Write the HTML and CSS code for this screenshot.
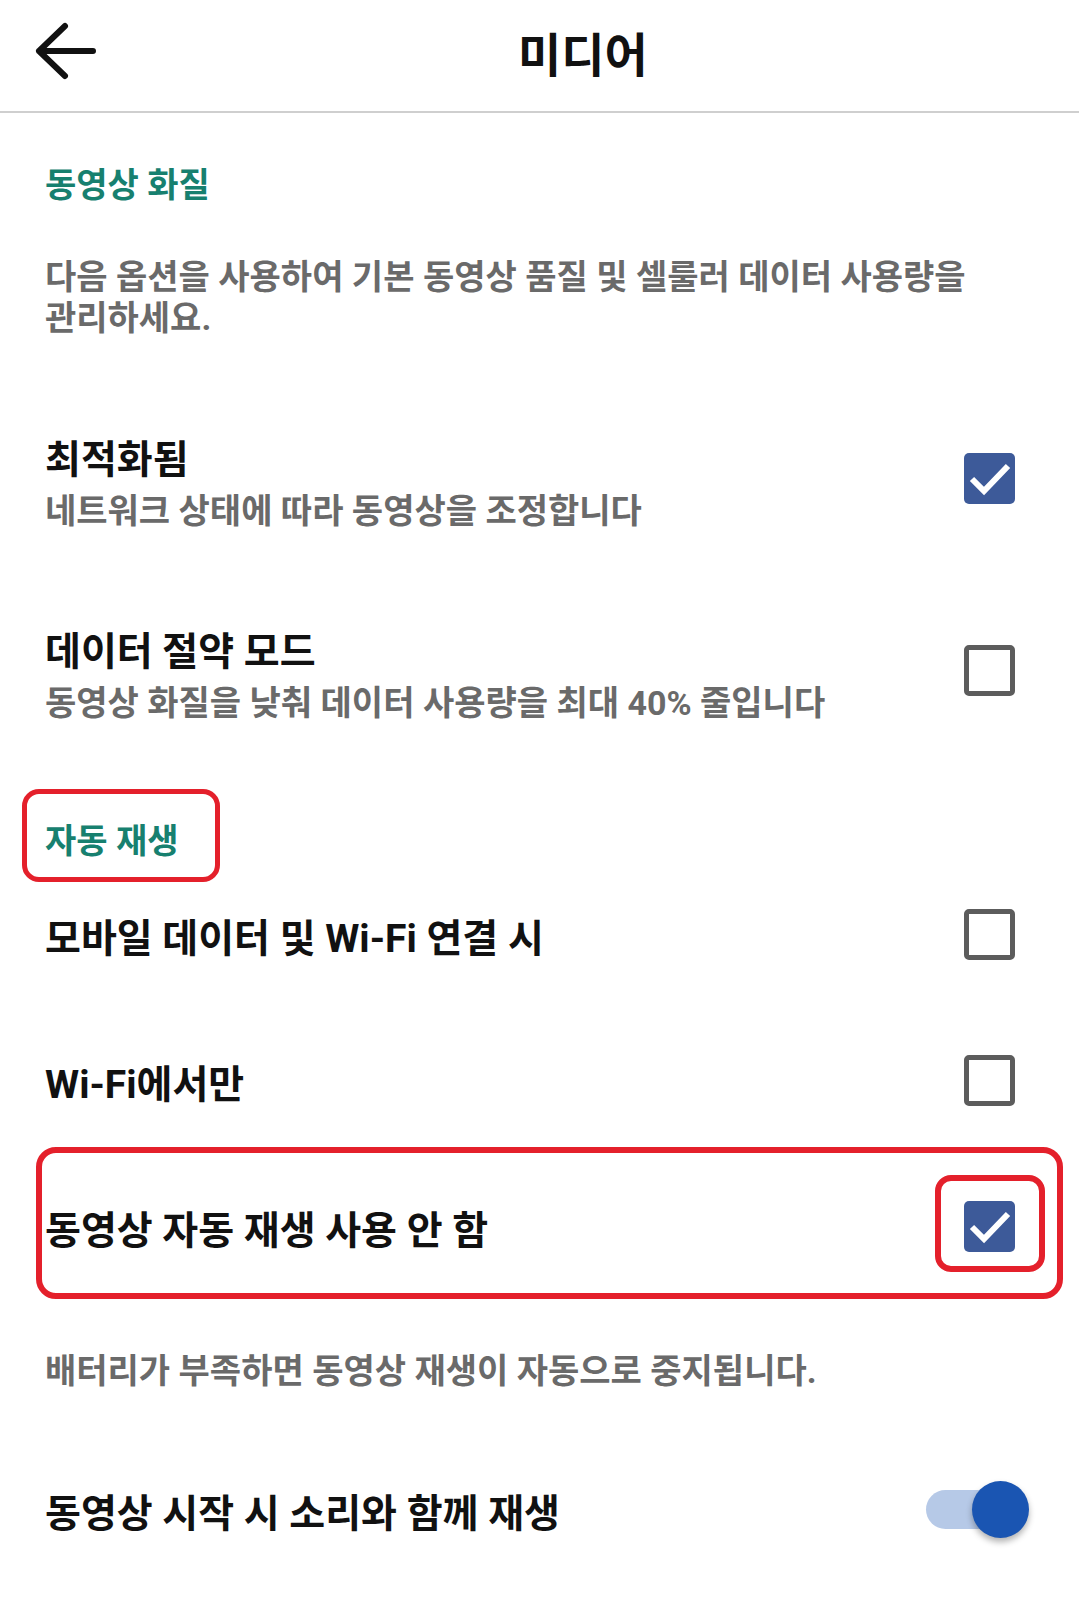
FILE: index.html
```html
<!DOCTYPE html>
<html lang="ko">
<head>
  <meta charset="UTF-8">
  <meta name="viewport" content="width=device-width, initial-scale=1">
  <title>미디어</title>
  <link rel="stylesheet" href="styles.css">
</head>
<body>
  <header>
    <svg class="back" viewBox="0 0 66 60" width="66" height="60">
      <path d="M33 5 L7 30 L33 55 M7 30 H61" fill="none" stroke="#111111" stroke-width="6" stroke-linecap="round" stroke-linejoin="round"/>
    </svg>
    <h1>미디어</h1>
  </header>

  <main>
    <h2 class="group">동영상 화질</h2>
    <p class="note intro">다음 옵션을 사용하여 기본 동영상 품질 및 셀룰러 데이터 사용량을 관리하세요.</p>

    <div class="row double">
      <div class="text">
        <div class="label">최적화됨</div>
        <div class="sub">네트워크 상태에 따라 동영상을 조정합니다</div>
      </div>
      <span class="check on">
        <svg viewBox="0 0 51 51" width="51" height="51"><path d="M8 26 L20 38 L44 13" fill="none" stroke="#ffffff" stroke-width="6"/></svg>
      </span>
    </div>

    <div class="row double">
      <div class="text">
        <div class="label">데이터 절약 모드</div>
        <div class="sub">동영상 화질을 낮춰 데이터 사용량을 최대 40% 줄입니다</div>
      </div>
      <span class="check"></span>
    </div>

    <h2 class="group second">자동 재생<span class="ring ring-title"></span></h2>

    <div class="row single">
      <div class="label">모바일 데이터 및 Wi-Fi 연결 시</div>
      <span class="check"></span>
    </div>

    <div class="row single">
      <div class="label">Wi-Fi에서만</div>
      <span class="check"></span>
    </div>

    <div class="row single marked">
      <div class="label">동영상 자동 재생 사용 안 함</div>
      <span class="check on">
        <svg viewBox="0 0 51 51" width="51" height="51"><path d="M8 26 L20 38 L44 13" fill="none" stroke="#ffffff" stroke-width="6"/></svg>
      </span>
      <span class="ring ring-row"></span>
      <span class="ring ring-box"></span>
    </div>

    <p class="note battery">배터리가 부족하면 동영상 재생이 자동으로 중지됩니다.</p>

    <div class="row single">
      <div class="label">동영상 시작 시 소리와 함께 재생</div>
      <span class="toggle"><span class="track"></span><span class="thumb"></span></span>
    </div>
  </main>
</body>
</html>
```

FILE: styles.css
```css
body {
  margin: 0;
  width: 1079px;
  background: #ffffff;
  color: #111111;
  font-family: Roboto, "Noto Sans CJK KR", sans-serif;
  font-weight: 700;
  word-break: keep-all;
}

header {
  display: flex;
  align-items: flex-start;
  height: 111px;
  border-bottom: 2px solid #cfcfcf;
}

.back {
  margin: 21px 0 0 32px;
}

h1 {
  margin: 26px 0 0 420px;
  font-size: 47px;
  line-height: 60px;
}

.group {
  margin: 0;
  padding: 52px 0 0 45px;
  color: #17806f;
  font-size: 34px;
  line-height: 40px;
}

.group.second {
  position: relative;
  padding-top: 51px;
}

.note {
  margin: 0;
  padding: 0 64px 0 45px;
  color: #6a6a6a;
  font-size: 34px;
  line-height: 41px;
}

.intro {
  margin: 52px 0 47px;
}

.battery {
  margin: 52px 0 44px;
}

.row {
  position: relative;
  display: flex;
  align-items: center;
  justify-content: space-between;
  padding: 45px 64px 41px 45px;
}

.row.double .text {
  padding-top: 4px;
}

.row.single {
  padding-top: 43px;
  padding-bottom: 43px;
}

.label {
  font-size: 39px;
  line-height: 51px;
}

.row.single .label {
  padding-top: 10px;
  line-height: 50px;
}

.sub {
  color: #6a6a6a;
  font-size: 34px;
  line-height: 51px;
}

.check {
  box-sizing: border-box;
  width: 51px;
  height: 51px;
  flex: none;
  border: 5px solid #5c5c5c;
  border-radius: 5px;
}

.row.double .check {
  margin-bottom: 12px;
}

.check.on {
  border: none;
  background: #3d5a99;
}

.check svg {
  display: block;
}

/* red marker outlines */
.ring {
  position: absolute;
  box-sizing: border-box;
  border: 6px solid #e4202b;
  border-radius: 17px;
}

.ring-title {
  top: 19px;
  left: 22px;
  width: 198px;
  height: 93px;
  border-width: 5px;
}

.ring-row {
  top: -6px;
  left: 36px;
  right: 16px;
  bottom: 0;
  border-radius: 20px;
}

.ring-box {
  top: 22px;
  left: 935px;
  width: 110px;
  height: 97px;
  border-radius: 16px;
}

.toggle {
  position: relative;
  flex: none;
  width: 103px;
  height: 57px;
  margin-right: -14px;
}

.track {
  position: absolute;
  top: 9px;
  left: 0;
  width: 84px;
  height: 39px;
  border-radius: 20px;
  background: #b6c9e7;
}

.thumb {
  position: absolute;
  top: 0;
  right: 0;
  width: 57px;
  height: 57px;
  border-radius: 50%;
  background: #1a55b2;
  box-shadow: 0 4px 6px rgba(0, 0, 0, 0.3);
}
```
